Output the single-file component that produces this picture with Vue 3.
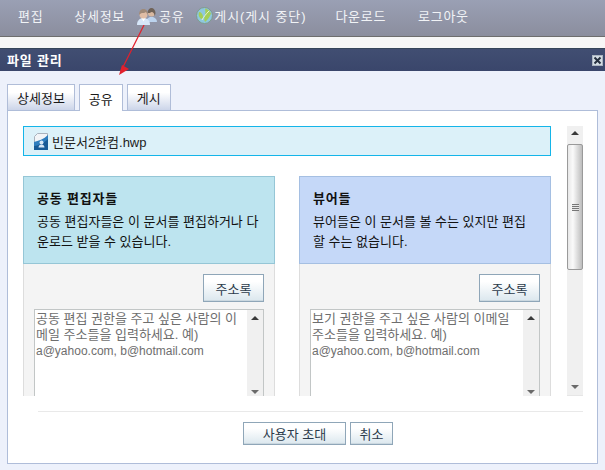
<template>
  <div class="page">
    <nav class="topbar">
      <span class="nav-item edit">편집</span>
      <span class="nav-item details">상세정보</span>
      <span class="nav-item share">
        <svg class="people" width="20" height="18" viewBox="0 0 20 18">
          <path d="M9 15c0-3 2-4 4-5h3c2 1 4 2 4 5z" fill="#bcd3ee" />
          <circle cx="14.500" cy="6" r="3.500" fill="#d8b8a0" />
          <path d="M10.500 6c0-3 2-5 4-5s4 2 4 5c0 1-1 3-1 3 0-2-1-4-3-4-1 1-3 1-3 1z" fill="#6f6257" />
          <path d="M0 18c0-4 2-6 5-7h3c3 1 5 3 5 7z" fill="#d6e6f8" />
          <path d="M4.500 11l2 3.500 2-3.500z" fill="#fff" />
          <circle cx="6.500" cy="7.500" r="4" fill="#e0bda5" />
          <path d="M2 8c0-4 2-6 4.500-6S11 4 11 8c-1-1-2-3-2-3-1 1-3 1-4 1-1 0-2 1-3 2z" fill="#a08a78" />
        </svg>
        공유
      </span>
      <span class="nav-item publish">
        <svg class="globe" width="17" height="17" viewBox="0 0 17 17">
          <circle cx="8.500" cy="8.500" r="8" fill="#8ec8de" stroke="#7f9a8c" stroke-width="1" />
          <path d="M9 1.500c3 .5 5 2.500 6 5-1 3-3 6-6 8.500-1-2-1-4 0-6 .5-3 .5-5 0-7.500z" fill="#a4cf56" />
          <path d="M3 5c2 0 4 2 4 5 0 1-1 2-2 2-2-2-3-4-2-7z" fill="#a4cf56" />
          <path d="M6 13c1.500-3 4-6 7-9" stroke="#eaf4d4" stroke-width="1" fill="none" />
        </svg>
        <span class="publish-label">게시(게시 중단)</span>
      </span>
      <span class="nav-item download">다운로드</span>
      <span class="nav-item logout">로그아웃</span>
    </nav>
    <div class="strip"></div>

    <section class="dialog">
      <header class="dialog-title">
        <span>파일 관리</span>
        <button class="close">
          <svg width="9" height="9" viewBox="0 0 9 9">
            <path d="M1.500 1.500l6 6M7.500 1.500l-6 6" stroke="#26303f" stroke-width="2" />
          </svg>
        </button>
      </header>

      <div class="dialog-body">
        <div class="tabs">
          <div v-for="tab in tabs" :key="tab" class="tab" :class="{ active: tab === '공유' }">{{ tab }}</div>
        </div>

        <div class="panel">
          <div class="scroll-area">
            <div class="scroll-content">
              <div class="file-box">
                <svg width="14" height="17" viewBox="0 0 14 17">
                  <path d="M3.500.5h10v16H.5V3.500z" fill="#f2f4f7" stroke="#a9b2bd" />
                  <path d="M0 9C4 8 10 6 14 2v15H0z" fill="#2f7dbd" />
                  <path d="M0 13c4 0 10-3 14-7v11H0z" fill="#175a96" />
                  <circle cx="7.500" cy="9.500" r="2" fill="#d5e6f5" />
                  <path d="M4.500 14.500c0-2 1.500-3 3-3s3 1 3 3z" fill="#d5e6f5" />
                </svg>
                <span>빈문서2한컴.hwp</span>
              </div>

              <div class="cards">
                <div v-for="card in cards" :key="card.title" class="card" :class="card.tone">
                  <div class="card-head">
                    <h3>{{ card.title }}</h3>
                    <p>{{ card.desc }}</p>
                  </div>
                  <div class="card-body">
                    <button class="btn book">주소록</button>
                    <div class="textbox">
                      <div class="textbox-text">{{ card.hint }}<br /><span class="email">a@yahoo.com, b@hotmail.com</span></div>
                      <div class="scrollbar small">
                        <i class="arrow up"></i>
                        <i class="arrow down"></i>
                      </div>
                    </div>
                  </div>
                </div>
              </div>
            </div>

            <div class="scrollbar main">
              <i class="arrow up"></i>
              <div class="thumb"><span class="grip"></span></div>
              <i class="arrow down"></i>
            </div>
          </div>

          <div class="actions">
            <button class="btn invite">사용자 초대</button>
            <button class="btn cancel">취소</button>
          </div>
        </div>
      </div>
    </section>

    <svg class="pointer" width="40" height="60" viewBox="0 0 40 60">
      <path d="M29 0L6 46" stroke="#e2202c" stroke-width="1.200" fill="none" />
      <path d="M4 50L7 40 14 44z" fill="#e2202c" />
    </svg>
  </div>
</template>

<script setup>
const tabs = ['상세정보', '공유', '게시']

const cards = [
  {
    title: '공동 편집자들',
    tone: 'teal',
    desc: '공동 편집자들은 이 문서를 편집하거나 다운로드 받을 수 있습니다.',
    hint: '공동 편집 권한을 주고 싶은 사람의 이메일 주소들을 입력하세요. 예)'
  },
  {
    title: '뷰어들',
    tone: 'blue',
    desc: '뷰어들은 이 문서를 볼 수는 있지만 편집할 수는 없습니다.',
    hint: '보기 권한을 주고 싶은 사람의 이메일 주소들을 입력하세요. 예)'
  }
]
</script>

<style scoped>
.page {
  position: relative;
  width: 605px;
  height: 470px;
  overflow: hidden;
  background: #edf1fb;
  font-family: "Liberation Sans", "Noto Sans CJK KR", sans-serif;
  font-size: 13px;
  color: #1a1a1a;
}

/* top menu */
.topbar {
  display: flex;
  align-items: center;
  box-sizing: border-box;
  height: 37px;
  padding: 0 0 5px 18px;
  background: linear-gradient(#9aa0b4, #8b8e9e);
  border-bottom: 1px solid #6e6e6e;
  color: #f1f3f6;
  letter-spacing: 0.7px;
  white-space: nowrap;
}
.nav-item { display: flex; align-items: center; }
.details { margin-left: 31px; }
.share { margin-left: 12px; }
.publish { margin-left: 12px; }
.download { margin-left: 29px; }
.logout { margin-left: 32px; }
.people { margin-right: 2px; }
.globe { margin-right: 1px; }
.publish-label { letter-spacing: 0.9px; }

.strip {
  height: 11px;
  background: #f7f7f7;
}

/* dialog */
.dialog-title {
  display: flex;
  align-items: center;
  justify-content: space-between;
  box-sizing: border-box;
  height: 23px;
  padding: 0 2px 2px 7px;
  background: linear-gradient(#414e72, #3a466b);
  border-top: 1px solid #36465a;
  color: #fff;
  font-weight: 700;
  letter-spacing: 0.8px;
}
.close {
  display: flex;
  align-items: center;
  justify-content: center;
  width: 11px;
  height: 11px;
  padding: 0;
  margin-top: 2px;
  background: #d3dce4;
  border: 1px solid #aab4c0;
}

.dialog-body {
  padding: 13px 7px 0;
}

.tabs {
  display: flex;
  gap: 4px;
  height: 26px;
}
.tab {
  box-sizing: border-box;
  height: 26px;
  padding: 0 9px;
  display: flex;
  align-items: center;
  background: linear-gradient(#fff 30%, #ccd5e9);
  border: 1px solid #b0bdd8;
  border-bottom: 0;
}
.tab.active {
  position: relative;
  z-index: 1;
  height: 27px;
  background: #fff;
}

.panel {
  box-sizing: border-box;
  height: 354px;
  padding: 15px 14px 0 15px;
  background: #fff;
  border: 1px solid #afbdd9;
}

.scroll-area {
  display: flex;
  gap: 16px;
  height: 270px;
  overflow: hidden;
}
.scroll-content {
  width: 528px;
}

.file-box {
  display: flex;
  align-items: center;
  gap: 4px;
  box-sizing: border-box;
  height: 30px;
  padding: 0 10px;
  background: #dcf1f9;
  border: 1px solid #14b5e9;
  color: #222;
}

.cards {
  display: flex;
  gap: 24px;
  margin-top: 20px;
}
.card {
  box-sizing: border-box;
  width: 252px;
  height: 240px;
  background: #f4f4f4;
  border: 1px solid #dddddd;
  border-top: 0;
}
.card-head {
  box-sizing: border-box;
  height: 88px;
  margin: 0 -1px;
  padding: 12px 13px 0;
  border: 1px solid;
}
.teal .card-head { background: #bde4ef; border-color: #95c6d6; }
.blue .card-head { background: #c5d8f8; border-color: #a5bfe2; }
.card-head h3 {
  margin: 0;
  font-size: 13px;
  font-weight: 700;
  letter-spacing: 0.8px;
  line-height: 20px;
  color: #111;
}
.card-head p {
  margin: 3px 0 0;
  line-height: 20px;
  color: #111;
  word-break: break-all;
}

.card-body {
  display: flex;
  flex-direction: column;
  align-items: flex-end;
  padding: 10px 10px 0;
}

.btn {
  box-sizing: border-box;
  padding: 0;
  font: inherit;
  color: #2b3a4a;
  background: linear-gradient(#fff 25%, #dbe7ee);
  border: 1px solid #8fa6b8;
  box-shadow: inset 0 -1px 0 #cbd8e0;
}
.book { width: 61px; height: 28px; }

.textbox {
  display: flex;
  box-sizing: border-box;
  width: 230px;
  height: 110px;
  margin-top: 7px;
  background: #fff;
  border: 1px solid #c2c6c6;
}
.textbox-text {
  flex: 1;
  padding: 1px 0 0 1px;
  line-height: 16px;
  color: #6e6e6e;
  word-break: break-all;
}
.email { font-size: 12px; }

/* scrollbars */
.scrollbar {
  position: relative;
  flex: none;
  width: 16px;
  background: #f0f0f0;
}
.scrollbar.main {
  height: 270px;
  border-bottom: 1px solid #e6e6e6;
  box-sizing: border-box;
}
.arrow {
  position: absolute;
  left: 4px;
  width: 0;
  height: 0;
  border-left: 4px solid transparent;
  border-right: 4px solid transparent;
}
.arrow.up { top: 5px; border-bottom: 4px solid #3a3a3a; }
.arrow.down { border-top: 4px solid #6a6a6a; }
.main .arrow.down { bottom: 6px; }
.small .arrow.up { top: 6px; }
.small .arrow.down { top: 80px; }

.thumb {
  position: absolute;
  top: 18px;
  left: 0;
  box-sizing: border-box;
  display: flex;
  align-items: center;
  justify-content: center;
  width: 16px;
  height: 126px;
  background: linear-gradient(90deg, #e8e8e8, #fafafa 35%, #bdbdbd);
  border: 1px solid #9a9a9a;
  border-radius: 2px;
}
.grip {
  width: 7px;
  height: 7px;
  background: repeating-linear-gradient(#777 0 1px, #e8e8e8 1px 2px);
}

.actions {
  display: flex;
  justify-content: center;
  gap: 4px;
  box-sizing: border-box;
  height: 48px;
  margin: 15px 0 0 15px;
  padding: 10px 0 0 15px;
  border-top: 1px solid #e9e9e9;
}
.invite { width: 103px; height: 23px; }
.cancel { width: 43px; height: 23px; }

/* red annotation arrow over the page */
.pointer {
  position: absolute;
  top: 25px;
  left: 115px;
}
</style>
